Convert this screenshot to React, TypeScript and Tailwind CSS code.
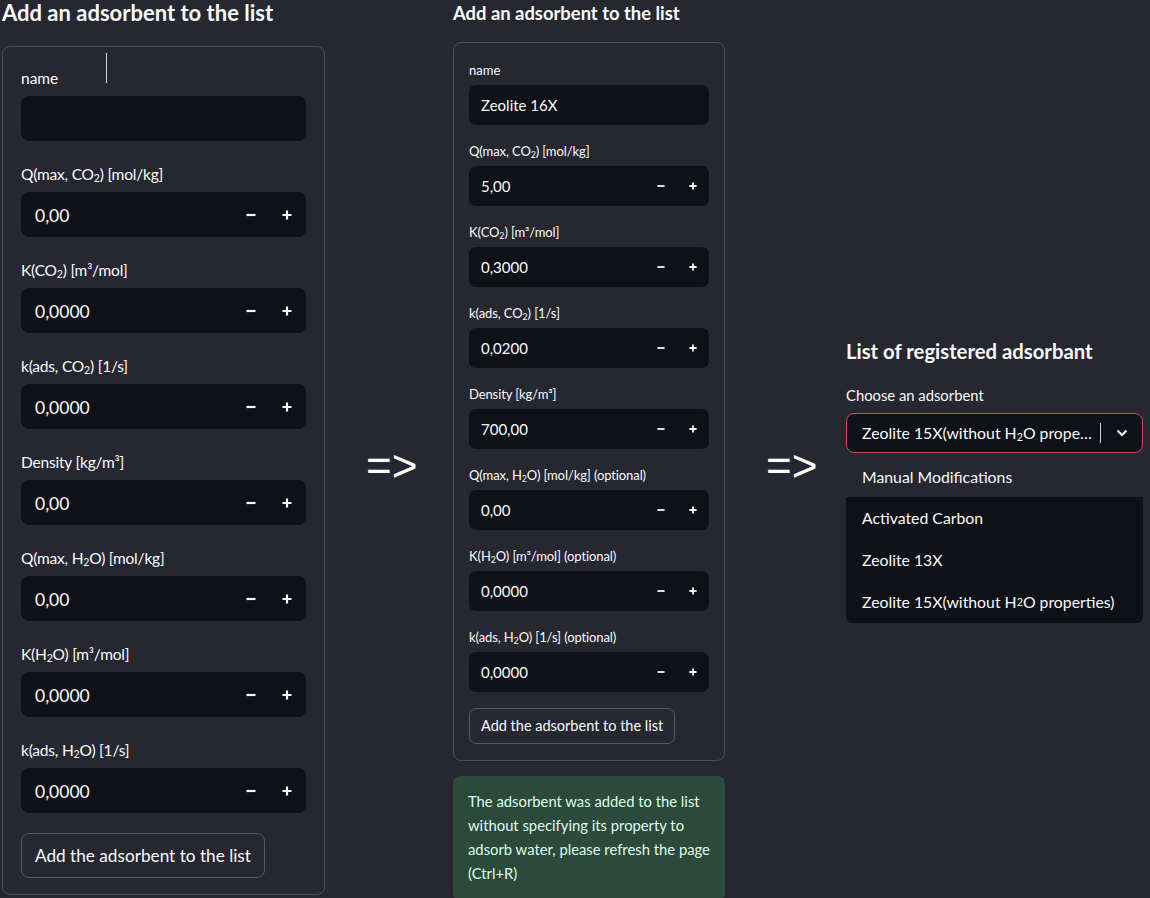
import React from "react";

const Sub = ({ children }: { children: React.ReactNode }) => (
  <span className="text-[0.68em] align-[-0.22em] leading-none">{children}</span>
);

const CO2 = () => (
  <>
    CO<Sub>2</Sub>
  </>
);
const H2O = () => (
  <>
    H<Sub>2</Sub>O
  </>
);

const Minus = ({ s }: { s: number }) => (
  <svg width={s} height={s} viewBox="0 0 10 10">
    <path d="M0.5 5H9.5" stroke="#fafafa" strokeWidth="2.2" />
  </svg>
);
const Plus = ({ s }: { s: number }) => (
  <svg width={s} height={s} viewBox="0 0 10 10">
    <path d="M0.5 5H9.5M5 0.5V9.5" stroke="#fafafa" strokeWidth="2.2" />
  </svg>
);

type F = { label: React.ReactNode; value?: string };

const leftFields: F[] = [
  { label: <>Q(max, <CO2 />) [mol/kg]</>, value: "0,00" },
  { label: <>K(<CO2 />) [m³/mol]</>, value: "0,0000" },
  { label: <>k(ads, <CO2 />) [1/s]</>, value: "0,0000" },
  { label: <>Density [kg/m³]</>, value: "0,00" },
  { label: <>Q(max, <H2O />) [mol/kg]</>, value: "0,00" },
  { label: <>K(<H2O />) [m³/mol]</>, value: "0,0000" },
  { label: <>k(ads, <H2O />) [1/s]</>, value: "0,0000" },
];

const midFields: F[] = [
  { label: <>Q(max, <CO2 />) [mol/kg]</>, value: "5,00" },
  { label: <>K(<CO2 />) [m³/mol]</>, value: "0,3000" },
  { label: <>k(ads, <CO2 />) [1/s]</>, value: "0,0200" },
  { label: <>Density [kg/m³]</>, value: "700,00" },
  { label: <>Q(max, <H2O />) [mol/kg] (optional)</>, value: "0,00" },
  { label: <>K(<H2O />) [m³/mol] (optional)</>, value: "0,0000" },
  { label: <>k(ads, <H2O />) [1/s] (optional)</>, value: "0,0000" },
];

function LeftNum({ label, value }: F) {
  return (
    <div className="mt-[22px]">
      <div className="text-[15.5px] tracking-[-0.2px] leading-[22px] h-[22px] whitespace-nowrap">{label}</div>
      <div className="mt-[7px] h-[45px] rounded-[8px] bg-[#0e1117] flex items-center pl-[14px]">
        <span className="flex-1 text-[17.5px] pt-[3px]">{value}</span>
        <div className="w-[36px] h-full flex items-center justify-center">
          <Minus s={10} />
        </div>
        <div className="w-[36px] h-full flex items-center justify-center mr-[1px]">
          <Plus s={10} />
        </div>
      </div>
    </div>
  );
}

function MidNum({ label, value }: F) {
  return (
    <div className="mt-[17px]">
      <div className="text-[13px] tracking-[-0.1px] leading-[18px] h-[18px] whitespace-nowrap">{label}</div>
      <div className="mt-[6px] h-[40px] rounded-[7px] bg-[#0e1117] flex items-center pl-[12px]">
        <span className="flex-1 text-[15px] pt-[1px]">{value}</span>
        <div className="w-[32px] h-full flex items-center justify-center">
          <Minus s={8} />
        </div>
        <div className="w-[32px] h-full flex items-center justify-center">
          <Plus s={8} />
        </div>
      </div>
    </div>
  );
}

export default function App() {
  return (
    <div
      className="w-[1150px] h-[898px] overflow-hidden bg-[#262730] text-[#fafafa] flex"
      style={{ fontFamily: "Lato, 'Noto Sans', sans-serif" }}
    >
      {/* Left column */}
      <div className="w-[323px] ml-[2px] shrink-0">
        <h1 className="text-[22px] leading-[26px] font-bold whitespace-nowrap">
          Add an adsorbent to the list
        </h1>
        <div className="relative mt-[20px] border border-[#4c4d56] rounded-[8px] px-[18px] pt-[20px] pb-[16px]">
          <div className="absolute left-[103px] top-[6px] w-[1px] h-[30px] bg-[#d8d8d8]" />
          <div className="text-[15.5px] leading-[22px] h-[22px]">name</div>
          <div className="mt-[7px] h-[45px] rounded-[8px] bg-[#0e1117]" />
          {leftFields.map((f, i) => (
            <LeftNum key={i} {...f} />
          ))}
          <button className="mt-[20px] h-[45px] px-[13px] rounded-[8px] border border-[#56575f] text-[17.2px] text-[#fafafa] whitespace-nowrap">
            Add the adsorbent to the list
          </button>
        </div>
      </div>

      {/* Arrow 1 */}
      <div className="w-[128px] shrink-0 pl-[41px] pt-[444px]">
        <div
          className="text-[44px] leading-[44px] text-white whitespace-nowrap"
          style={{ fontFamily: "'Liberation Sans', sans-serif" }}
        >
          =&gt;
        </div>
      </div>

      {/* Middle column */}
      <div className="w-[272px] shrink-0">
        <h2 className="text-[18.4px] leading-[27px] font-bold whitespace-nowrap">
          Add an adsorbent to the list
        </h2>
        <div className="mt-[15px] border border-[#4c4d56] rounded-[8px] px-[15px] pt-[18px] pb-[16px]">
          <div className="text-[13px] leading-[18px] h-[18px]">name</div>
          <div className="mt-[6px] h-[40px] rounded-[7px] bg-[#0e1117] flex items-center pl-[12px] text-[15px]">
            Zeolite 16X
          </div>
          {midFields.map((f, i) => (
            <MidNum key={i} {...f} />
          ))}
          <button className="mt-[16px] h-[36px] px-[11px] rounded-[7px] border border-[#56575f] text-[14.5px] text-[#fafafa] whitespace-nowrap">
            Add the adsorbent to the list
          </button>
        </div>
        <div className="mt-[15px] rounded-[7px] bg-[#2b4a3b] text-[#dffde9] px-[15px] pt-[13px] pb-[16px] text-[14.8px] leading-[24px] whitespace-nowrap">
          The adsorbent was added to the list
          <br />
          without specifying its property to
          <br />
          adsorb water, please refresh the page
          <br />
          (Ctrl+R)
        </div>
      </div>

      {/* Arrow 2 */}
      <div className="w-[121px] shrink-0 pl-[41px] pt-[444px]">
        <div
          className="text-[44px] leading-[44px] text-white whitespace-nowrap"
          style={{ fontFamily: "'Liberation Sans', sans-serif" }}
        >
          =&gt;
        </div>
      </div>

      {/* Right column */}
      <div className="w-[297px] shrink-0 pt-[338px]">
        <h2 className="text-[20.3px] leading-[26px] font-bold whitespace-nowrap">
          List of registered adsorbant
        </h2>
        <div className="mt-[21px] text-[14.8px] leading-[20px]">Choose an adsorbent</div>
        <div className="mt-[8px] h-[40px] rounded-[8px] border border-[#d9484b] bg-[#0e1117] flex items-center pl-[15px] pr-[14px]">
          <span className="text-[15.8px] whitespace-nowrap">
            Zeolite 15X(without <H2O /> prope…
          </span>
          <span className="ml-[8px] w-[1px] h-[20px] bg-[#d0d0d0]" />
          <span className="flex-1" />
          <svg width="12" height="8" viewBox="0 0 12 8">
            <path d="M1.5 1.5L6 6L10.5 1.5" stroke="#fafafa" strokeWidth="2" fill="none" />
          </svg>
        </div>
        <div className="mt-[3px] rounded-b-[6px] bg-[#0e1117] overflow-hidden text-[15.8px]">
          <div className="h-[41px] flex items-center px-[16px] bg-[#262730]">Manual Modifications</div>
          <div className="h-[42px] flex items-center px-[16px]">Activated Carbon</div>
          <div className="h-[42px] flex items-center px-[16px]">Zeolite 13X</div>
          <div className="h-[42px] flex items-center px-[16px] whitespace-nowrap">
            Zeolite 15X(without <H2O /> properties)
          </div>
        </div>
      </div>
    </div>
  );
}
